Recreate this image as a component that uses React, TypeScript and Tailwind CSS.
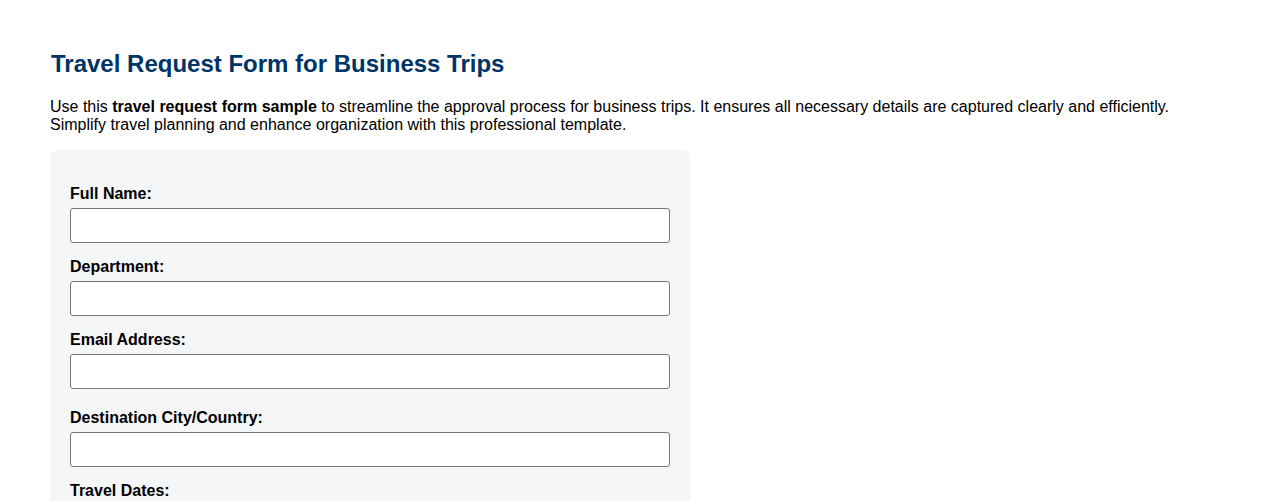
export default function App() {
  const fields = [
    { label: 'Full Name:', extra: false },
    { label: 'Department:', extra: false },
    { label: 'Email Address:', extra: true },
    { label: 'Destination City/Country:', extra: false },
  ]

  return (
    <div className="min-h-screen bg-white px-[50px] pt-[46px] font-['Liberation_Sans',Arial,sans-serif] text-black">
      <h2 className="mb-[16px] pl-px text-[24px] font-bold leading-normal text-[#003366]">
        Travel Request Form for Business Trips
      </h2>
      <p className="mb-4 text-base leading-[18px]">
        Use this <strong>travel request form sample</strong> to streamline the approval process for business trips. It
        ensures all necessary details are captured clearly and efficiently. Simplify travel planning and enhance
        organization with this professional template.
      </p>

      <form className="w-[640px] rounded-lg bg-[#f5f6f8] px-5 pb-5 pt-[35px]">
        {fields.map((field) => (
          <div key={field.label}>
            <label className="mb-[5px] block text-base font-bold leading-[18px]">{field.label}</label>
            <input
              type="text"
              className={`block h-[35px] w-full rounded-[3px] border border-[#767676] bg-white px-2 ${
                field.extra ? 'mb-[20px]' : 'mb-[15px]'
              }`}
            />
          </div>
        ))}
        <label className="mb-[5px] block text-base font-bold leading-[18px]">Travel Dates:</label>
        <input type="date" className="block h-[35px] w-full rounded-[3px] border border-[#767676] bg-white px-2" />
      </form>
    </div>
  )
}
